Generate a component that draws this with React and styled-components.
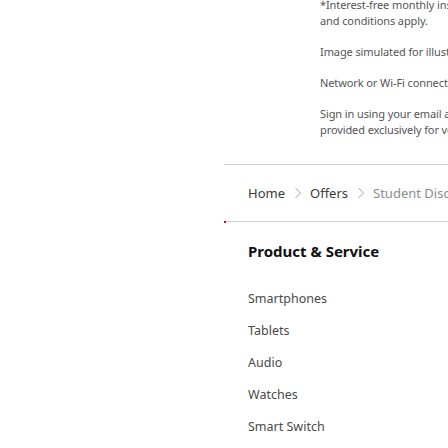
import React from 'react';
import styled, { createGlobalStyle } from 'styled-components';

const GlobalStyle = createGlobalStyle`
  html, body {
    margin: 0;
    padding: 0;
    background: #ffffff;
  }
  body {
    font-family: 'Noto Sans', 'Open Sans', sans-serif;
    color: #000;
    overflow: hidden;
  }
`;

const notes = [
  ['*Interest-free monthly installments available. Terms', 'and conditions apply.'],
  ['Image simulated for illustration purposes only.'],
  ['Network or Wi-Fi connection required.'],
  ['Sign in using your email address. Offer is', 'provided exclusively for verified students.'],
];

const crumbs = [
  { label: 'Home', current: false },
  { label: 'Offers', current: false },
  { label: 'Student Discount Program', current: true },
];

const products = ['Smartphones', 'Tablets', 'Audio', 'Watches', 'Smart Switch'];

const App = () => {
  return (
    <Page>
      <GlobalStyle />
      <Disclaimer>
        {notes.map((lines, i) => (
          <Note key={i}>
            {lines.map((l, j) => (
              <NoteLine key={j}>{l}</NoteLine>
            ))}
          </Note>
        ))}
      </Disclaimer>
      <Footer>
        <Breadcrumb>
          {crumbs.map((c, i) => (
            <Crumb key={c.label} $current={c.current}>
              {i > 0 && (
                <Chevron viewBox="0 0 8 12" width="8" height="12">
                  <path d="M1.5 1 L6.5 6 L1.5 11" fill="none" stroke="#a0a0a0" strokeWidth="1" />
                </Chevron>
              )}
              {c.label}
            </Crumb>
          ))}
        </Breadcrumb>
        <Marker />
        <Section>
          <Heading>Product &amp; Service</Heading>
          <List>
            {products.map((p) => (
              <Item key={p}>{p}</Item>
            ))}
          </List>
        </Section>
      </Footer>
    </Page>
  );
};

export default App;

const Page = styled.div`
  width: 448px;
  height: 448px;
  overflow: hidden;
  position: relative;
`;

const Disclaimer = styled.div`
  padding-left: 320px;
  margin-top: -3px;
  display: flex;
  flex-direction: column;
  gap: 15px;
`;

const Note = styled.p`
  margin: 0;
  font-size: 11px;
  line-height: 16px;
  color: #555;
  white-space: nowrap;
  letter-spacing: -0.1px;
`;

const NoteLine = styled.span`
  display: block;
`;

const Footer = styled.div`
  margin-top: 26px;
  margin-left: 224px;
  position: relative;
`;

const Breadcrumb = styled.nav`
  display: flex;
  align-items: center;
  height: 56px;
  padding-left: 24px;
  border-top: 1px solid #cfcfcf;
  border-bottom: 1px solid #cfcfcf;
  white-space: nowrap;
  font-size: 13px;
`;

const Crumb = styled.span`
  display: inline-flex;
  align-items: center;
  color: ${(p) => (p.$current ? '#8c8c8c' : '#3c3c3c')};
`;

const Chevron = styled.svg`
  margin: 0 8px 0 9px;
`;

const Marker = styled.span`
  position: absolute;
  left: 0;
  top: 57px;
  width: 2px;
  height: 2px;
  background: #ff0000;
`;

const Section = styled.div`
  padding: 18px 24px 0;
`;

const Heading = styled.h2`
  margin: 0;
  font-size: 15px;
  font-weight: 700;
  line-height: 22px;
  color: #111;
`;

const List = styled.ul`
  list-style: none;
  margin: 0;
  padding: 28px 0 0;
  display: flex;
  flex-direction: column;
  gap: 14px;
`;

const Item = styled.li`
  font-size: 12.5px;
  line-height: 18px;
  color: #4a4a4a;
`;
